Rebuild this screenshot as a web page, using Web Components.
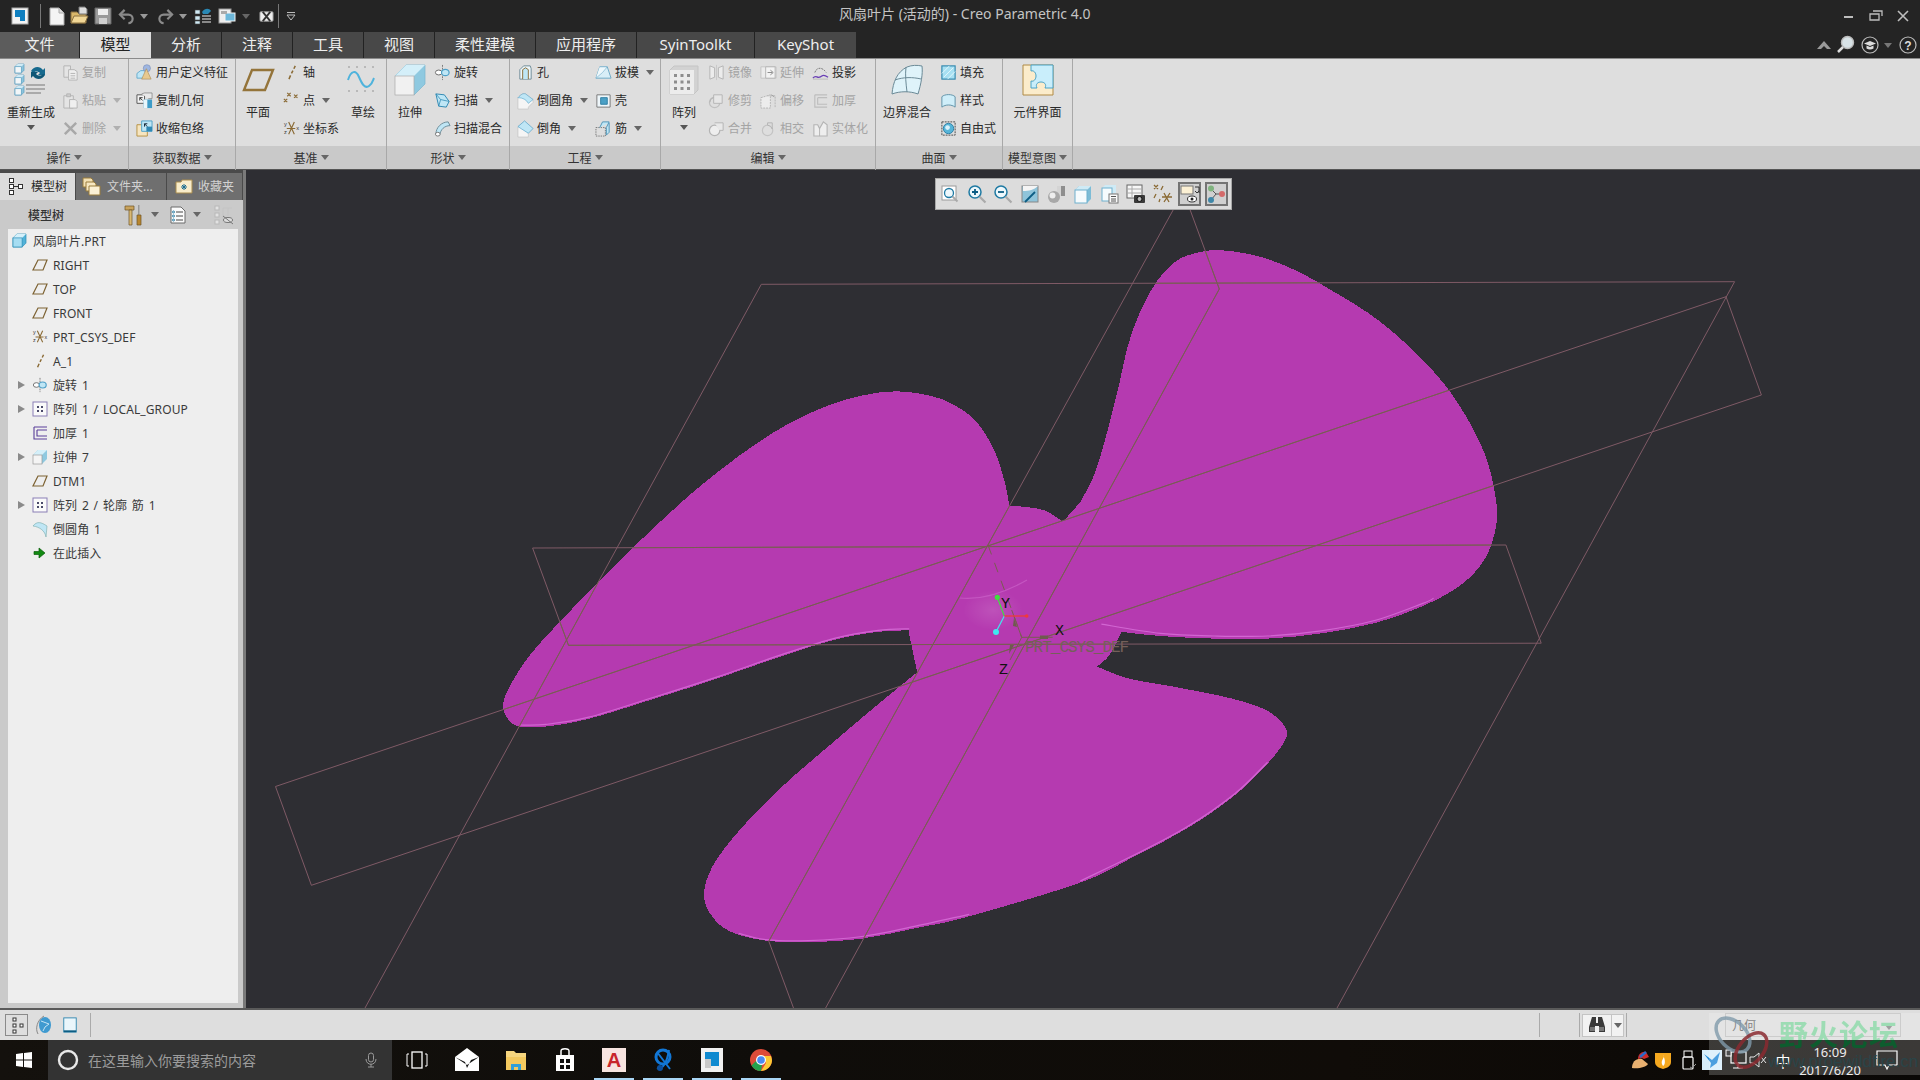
<!DOCTYPE html>
<html lang="zh"><head><meta charset="utf-8"><title>Creo Parametric</title>
<style>html,body{margin:0;padding:0;background:#222;overflow:hidden}</style></head>
<body><creo-app></creo-app>
<script>
const FONT='"Noto Sans","Noto Sans CJK SC",sans-serif';
const cube=(x,y,s,f='#f2f6f8',t='#cfeaf5',r='#8cc4dc',st='#5b9fc0')=>`<path d="M${x} ${y+s*.3}l${s*.3} -${s*.3}h${s*.7}v${s*.7}l-${s*.3} ${s*.3}h-${s*.7}z" fill="${r}" stroke="${st}" stroke-width=".7"/><path d="M${x} ${y+s*.3}l${s*.3} -${s*.3}h${s*.7}l-${s*.3} ${s*.3}z" fill="${t}"/><rect x="${x}" y="${y+s*.3}" width="${s*.7}" height="${s*.7}" fill="${f}" stroke="${st}" stroke-width=".7"/>`;
const G='#b4b4b4',GF='#e4e4e4',BR='#8a6a34',BL='#4fa0c8',LB='#bfe6f5';
const csysI=`<g font-family="Liberation Sans" font-size="6" fill="#333"><text x="1" y="6">y</text><text x="1" y="15">z</text><text x="14" y="11">x</text></g><path d="M6 2l6 13M12 2L6 15M4 9h9" stroke="${BR}" stroke-width="1.200" fill="none"/>`;
const ICONS={
 copy:[18,`<path d="M2 2h7v12H2z" fill="${GF}" stroke="${G}"/><path d="M7 6h6l3 2v9H7z" fill="#efefef" stroke="${G}"/><path d="M9 10h5M9 12.500h5M9 15h5" stroke="${G}"/>`],
 paste:[18,`<path d="M2 4h10v13H2z" fill="${GF}" stroke="${G}"/><path d="M5 2h4v3H5z" fill="#ccc" stroke="${G}"/><path d="M8 8h6l2 2v7H8z" fill="#efefef" stroke="${G}"/>`],
 del:[18,`<path d="M3 3l12 12M15 3L3 15" stroke="#a8a8a8" stroke-width="2.600"/>`],
 udf:[18,`<path d="M1 10l4-3h5v5l-3 3H1z" fill="${LB}" stroke="${BL}" stroke-width=".8"/><circle cx="11.500" cy="4.500" r="3.800" fill="#9fb6e0" stroke="#6f86b6" stroke-width=".6"/><path d="M11 5l5 11H6z" fill="#e7c98f" stroke="#a5854a" stroke-width=".6"/>`],
 cpgeo:[18,`<path d="M1 3h8v9H1z" fill="#f4f4f4" stroke="#555"/><path d="M4 6l3 3M4 9V6h3" stroke="#333" fill="none"/><path d="M8 8h9v9H8z" fill="#3d9cc8"/><path d="M8 8h4v9H8z" fill="#e8f6fb"/><path d="M6 2l3-1h8v6h-4" fill="#e8e8e8" stroke="#777" stroke-width=".7"/>`],
 shrink:[18,`<path d="M1 5h11v12H1z" fill="#f6e5c0" stroke="#b79243"/><path d="M6 1h11v11H6z" fill="${LB}" stroke="${BL}"/><path d="M9 4l3 3M9 7V4h3" stroke="#123" fill="none"/><path d="M11 7h6v5h-6z" fill="#2f88b4"/>`],
 axis:[18,`<path d="M13 2l-1.500 3M10.500 7l-1.500 3M8 12l-1.700 4" stroke="${BR}" stroke-width="1.600"/>`],
 point:[20,`<g stroke="${BR}" stroke-width="1.300"><path d="M5 1l4 4M9 1L5 5M13 3l4 4M17 3l-4 4M1 8l4 4M5 8l-4 4"/></g>`],
 csys:[18,csysI],
 rev:[18,`<path d="M9 1v16" stroke="#777" stroke-dasharray="2 1"/><ellipse cx="5" cy="9" rx="3.500" ry="2.600" fill="#fff" stroke="#666"/><ellipse cx="12" cy="9" rx="4" ry="3.400" fill="${LB}" stroke="${BL}" stroke-width="1.300"/>`],
 sweep:[18,`<path d="M2 2l9 1 5 7-3 6-8-1z" fill="${LB}" stroke="#2d87b1"/><path d="M2 2l5 6 9 2M7 8l-2 7" stroke="#2d87b1" fill="none" stroke-width=".8"/>`],
 swpb:[18,`<path d="M2 15C2 8 8 2 15 2l2 4C11 6 7 10 6 16z" fill="${LB}" stroke="#6a8b98"/><ellipse cx="4" cy="15" rx="2.500" ry="2" fill="#fff" stroke="#777"/>`],
 hole:[18,`<path d="M3 6l4-4h7l1 3v11H3z" fill="#eef7fb" stroke="#6d8a96"/><path d="M6 16V6l3-2 3 2v10" fill="${LB}" stroke="${BR}"/>`],
 round:[18,`<path d="M1 6C4 3 6 1 9 2l8 6v3l-5 5v2H1z" fill="#f5f5f5" stroke="#bbb" stroke-width=".6"/><path d="M1 6C4 3 6 1 9 2l8 6-5 4C10 8 6 6 1 6z" fill="${LB}" stroke="${BL}" stroke-width=".6"/>`],
 cham:[18,`<path d="M1 7l7-6 9 8-5 5v4H1z" fill="#f5f5f5" stroke="#bbb" stroke-width=".6"/><path d="M1 7l7-6 9 8-5 5z" fill="${LB}" stroke="${BL}" stroke-width=".7"/>`],
 draft:[18,`<path d="M1 15l4-12h8l4 12z" fill="#d8eef7" stroke="#6aa8c6"/><path d="M5 3l8 0-5 6-7 6" fill="#eef8fc" stroke="#6aa8c6" stroke-width=".6"/>`],
 shell:[18,`<path d="M2 3h14v13H2z" fill="#eef6fa" stroke="#777"/><path d="M6 6h7v7H6z" fill="#4aa0c6" stroke="#2f7ea4"/>`],
 rib:[18,`<path d="M1 8h10v9H1z" fill="none" stroke="#777" stroke-dasharray="1.500 1"/><path d="M5 8l3-6h7l-3 6v8l3-3V3" fill="${LB}" stroke="#4d94b8"/>`],
 mirror:[18,`<path d="M2 2l5 2v10l-5 2z" fill="#ececec" stroke="${G}"/><path d="M16 2l-5 2v10l5 2z" fill="#ececec" stroke="${G}"/><path d="M9 1v16" stroke="#c8c8c8"/>`],
 extend:[18,`<path d="M1 3h16v12H1z" fill="#ececec" stroke="#c4c4c4"/><path d="M6 3h10v12H6z" fill="#f3f3f3" stroke="${G}"/><path d="M8 9h5M11 6.500l3 2.500-3 2.500" stroke="#888" fill="none"/>`],
 project:[18,`<path d="M3 9c2-6 8-6 12 0" stroke="#777" fill="none" stroke-dasharray="2 1"/><path d="M1 15c3-4 4 0 7-1s3-4 9 0" stroke="#6a3fb5" stroke-width="1.400" fill="none"/><path d="M1 16h16" stroke="#bbb"/>`],
 trim:[18,`<circle cx="7" cy="11" r="5.500" fill="none" stroke="#c0c0c0" stroke-width="1.300"/><path d="M6 3h9v9H6z" fill="#e6e6e6" stroke="${G}"/><path d="M2 11a5 5 0 0 1 4-5" stroke="${G}" fill="none"/>`],
 offset:[18,`<path d="M1 6l10-3v14H1z" fill="#ececec" stroke="${G}" stroke-dasharray="2 1"/><path d="M8 4h8v13" fill="none" stroke="${G}" stroke-dasharray="2 1"/><path d="M12 3l3 2" stroke="#999"/>`],
 thick:[18,`<path d="M3 3h13M3 3v13h13M6 6h10M6 6v7h10" fill="none" stroke="#bdbdbd" stroke-width="1.200"/>`],
 merge:[18,`<circle cx="7" cy="11" r="5.500" fill="#eee" stroke="${G}" stroke-width="1.300"/><path d="M7 3h9v8H12" fill="#e8e8e8" stroke="${G}"/>`],
 inter:[18,`<circle cx="8" cy="11" r="5.500" fill="none" stroke="#c4c4c4" stroke-width="1.300"/><path d="M8 5.500a5.500 5.500 0 0 1 5 4V3H8z" fill="#ddd" stroke="${G}"/>`],
 solid:[18,`<path d="M2 5h4l2 4 4-7 4 3v12H2z" fill="#eee" stroke="${G}" stroke-width="1.200"/><path d="M8 9v8" stroke="${G}"/>`],
 fill:[18,`<rect x="2" y="2" width="14" height="14" fill="#a8e0f2" stroke="#2f86ad" stroke-width="1.200"/><path d="M2 10l8-8M4 14L14 4M8 16l8-8" stroke="#e3f6fc"/>`],
 style:[18,`<path d="M2 16V5c3-3 11-3 14 0v11c-4-3-10-3-14 0z" fill="#cfeef9" stroke="#5e8fa6"/>`],
 free:[18,`<rect x="2" y="2" width="14" height="14" fill="none" stroke="#444" stroke-dasharray="2 1"/><circle cx="9" cy="9" r="5.500" fill="#55b4d8" stroke="#2f7ea4"/><circle cx="8" cy="8" r="2.500" fill="#d8f1fa"/>`],
 regen:[32,`${cube(0,0,9)}${cube(0,11,9)}${cube(0,22,9)}<path d="M16 7c3-5 9-5 12-1l2-2v7h-7l2-2c-2-2-5-2-7 0z" fill="#176a8e"/><path d="M30 11c-3 5-9 5-12 1l-2 2V8h7l-2 2c2 2 5 2 7 0z" fill="#0f5776"/><path d="M11 21h19M11 25h19M11 29h15" stroke="#999" stroke-width="1.500"/>`],
 plane:[32,`<path d="M10 6h21L23 26H2z" fill="none" stroke="#94743a" stroke-width="2.400"/>`],
 sketch:[32,`<g fill="#777"><circle cx="2" cy="3" r=".7"/><circle cx="10" cy="3" r=".7"/><circle cx="18" cy="3" r=".7"/><circle cx="26" cy="3" r=".7"/><circle cx="2" cy="27" r=".7"/><circle cx="10" cy="27" r=".7"/><circle cx="18" cy="27" r=".7"/><circle cx="26" cy="27" r=".7"/></g><path d="M1 16c3-10 8-10 11-3s6 12 10 9 4-6 5-8" fill="none" stroke="#4fb3dc" stroke-width="2"/>`],
 extrude:[32,`<path d="M1 12L12 1h19v19L20 31z" fill="#8fc9e0" stroke="#7ab4ce" stroke-width=".7"/><path d="M1 12L12 1h19L20 12z" fill="#d4eff9"/><rect x="1" y="12" width="19" height="19" fill="#f1f1f1" stroke="#aaa" stroke-width=".7"/>`],
 pattern:[32,`<path d="M2 6l4-4h24v24l-4 4H2z" fill="#d2d2d2" stroke="#c4c4c4"/><rect x="2" y="6" width="24" height="24" fill="#ececec"/><g fill="#8e8e8e"><path d="M6 10h3v3H6zM12.500 10h3v3h-3zM19 10h3v3h-3zM6 16.500h3v3H6zM12.500 16.500h3v3h-3zM19 16.500h3v3h-3zM6 23h3v3H6zM12.500 23h3v3h-3zM19 23h3v3h-3z"/></g>`],
 bound:[32,`<path d="M1 30C2 18 6 8 16 3c5-2 10-2 15-1 1 8-1 18-4 28-8-3-18-3-26 0z" fill="#dff3fa" stroke="#6b8a97"/><path d="M15 3c-1 8 0 17 1 25M4 16c8-3 18-3 26-1" stroke="#6b8a97" fill="none"/>`],
 comp:[32,`<path d="M1 1h30v30H1z" fill="#fbeccb" stroke="#b08a45"/><path d="M9 1h22v23h-8c2-4-1-6-4-6s-6 2-4 6h-6v-7c3 1 5-2 5-5s-2-6-5-5z" fill="#c9eefb" stroke="#4aa3c8"/>`],
 treeI:[18,`<g fill="#fff" stroke="#333"><rect x="1.500" y="1.500" width="4" height="4"/><rect x="1.500" y="7.500" width="4" height="4"/><rect x="1.500" y="13.500" width="4" height="4"/><rect x="10.500" y="7.500" width="4" height="4"/></g><path d="M5.500 9.500h5" stroke="#333"/>`],
 folders:[20,`<path d="M1 2h8l2 2v7H1z" fill="#f2e0b4" stroke="#9a7c3c"/><path d="M4 6h8l2 2v7H4z" fill="#f6e7c2" stroke="#9a7c3c"/><path d="M7 10h11v9H7z" fill="#fbf0d4" stroke="#9a7c3c"/>`],
 fav:[18,`<path d="M1 5h5l1-2h10v13H1z" fill="#f8ecca" stroke="#a98c4e"/><path d="M9 7v6M6 10h6M7 8l4 4M11 8l-4 4" stroke="#1b6c90"/>`],
 part:[14,cube(0,0,13,'#a6ddf2','#d5f0fa','#52b2d8','#2a8cb6')],
 pl:[16,`<path d="M6 3h9l-4 10H1z" fill="none" stroke="#7d6232" stroke-width="1.200"/>`],
 patt:[16,`<rect x="1" y="1" width="14" height="14" fill="#fafafa" stroke="#8a7fb5"/><path d="M5 5h2v2H5zM9 5h2v2H9zM5 9h2v2H5zM9 9h2v2H9z" fill="#4a4a6a"/>`],
 thk:[16,`<path d="M2 2h13M2 2v12h13M5 5h10M5 5v6h10" fill="none" stroke="#5a3e9a" stroke-width="1.100"/>`],
 ext:[16,`<path d="M1 6l5-5h9v9l-5 5z" fill="#8fc9e0"/><path d="M1 6l5-5h9l-5 5z" fill="#d4eff9"/><rect x="1" y="6" width="9" height="9" fill="#f4f4f4" stroke="#999" stroke-width=".7"/>`],
 rnd:[16,`<path d="M1 5C5 0 9 1 15 5l-1 11c-1-6-6-10-13-11z" fill="#bfe6f5" stroke="#7aa" stroke-width=".6"/>`],
 ins:[16,`<path d="M2 6.500h5V3l6 5-6 5V9.500H2z" fill="#128a12" stroke="#0b5c0b" stroke-width=".7"/>`],
 hammer:[22,`<path d="M1 2h9v4H1z" fill="#c9a35c" stroke="#6d5426" stroke-width=".7"/><path d="M5 6h3v15H5z" fill="#d9b873" stroke="#6d5426" stroke-width=".7"/><path d="M14 1h1.500v10H14z" fill="#999"/><path d="M13 11h4v10h-4z" fill="#b8862e" stroke="#6d5426" stroke-width=".7"/>`],
 list:[18,`<path d="M2 1h10l4 4v12H2z" fill="#fbfbfb" stroke="#6b6b6b"/><path d="M7 6h7M7 10h7M7 14h7" stroke="#444"/><g fill="none" stroke="#2a7ea5"><circle cx="4.500" cy="6" r="1"/><circle cx="4.500" cy="10" r="1"/><circle cx="4.500" cy="14" r="1"/></g>`],
 hide:[20,`<g fill="#e2e2e2" stroke="#b8b8b8"><rect x="1" y="1" width="4" height="4"/><rect x="1" y="8" width="4" height="4"/><rect x="1" y="15" width="4" height="4"/></g><path d="M9 3h9M9 3v14M14 3v8" stroke="#c4c4c4" fill="none"/><ellipse cx="14" cy="15" rx="4.500" ry="2.500" fill="#ddd" stroke="#777"/><path d="M9 11l10 8" stroke="#777"/>`],
 logo:[18,`<rect x="1" y="1" width="16" height="16" fill="#f3f3f3" stroke="#aaa"/><rect x="4" y="3" width="10" height="11" fill="#0f7fc0"/><rect x="4" y="10" width="5" height="5" fill="#f3f3f3"/>`],
 new:[18,`<path d="M2 1h9l5 5v12H2z" fill="#f4f4f4" stroke="#aaa"/><path d="M11 1v5h5" fill="#ddd" stroke="#aaa"/>`],
 open:[20,`<path d="M2 6h6l2 2h7v9H2z" fill="#d9b76a" stroke="#8a7040"/><path d="M2 17l3-7h14l-3 7z" fill="#f1d796" stroke="#8a7040"/><path d="M10 1h6l2 2v5h-8z" fill="#ddd" stroke="#777"/>`],
 save:[18,`<path d="M1 1h16v16H1z" fill="#9a9a9a" stroke="#666"/><rect x="4" y="2" width="10" height="6" fill="#eee"/><rect x="5" y="11" width="8" height="6" fill="#d0d0d0"/>`],
 undo:[18,`<path d="M2 7h9a4.500 4.500 0 0 1 0 9" fill="none" stroke="#8a8a8a" stroke-width="2.300"/><path d="M7 2L2 7l5 5" fill="none" stroke="#8a8a8a" stroke-width="2.300"/>`],
 redo:[18,`<path d="M16 7H7a4.500 4.500 0 0 0 0 9" fill="none" stroke="#8a8a8a" stroke-width="2.300"/><path d="M11 2l5 5-5 5" fill="none" stroke="#8a8a8a" stroke-width="2.300"/>`],
 qregen:[18,`<g fill="#cfeaf5" stroke="#444" stroke-width=".6"><rect x="1" y="3" width="5" height="4"/><rect x="1" y="9" width="5" height="4"/><rect x="1" y="14" width="5" height="3"/></g><path d="M8 9h9M8 12h9M8 15h9" stroke="#aaa" stroke-width="1.400"/><path d="M8 5c3-4 7-4 9-1l-3 3h-5z" fill="#2a88b4"/>`],
 win:[18,`<rect x="1" y="2" width="12" height="14" fill="#eee" stroke="#999"/><rect x="7" y="6" width="10" height="8" fill="#6db7d9" stroke="#f4f4f4"/><rect x="3" y="4" width="6" height="3" fill="#aaa"/>`],
 closeq:[16,`<rect x="1" y="3" width="14" height="10" rx="1" fill="#eee" stroke="#999"/><path d="M4 3l8 10M12 3L4 13" stroke="#333" stroke-width="2"/>`],
 qarrow:[12,`<path d="M2 2.500h8" stroke="#bbb"/><path d="M2 5l4 5 4-5z" fill="none" stroke="#bbb"/>`],
 min:[14,`<path d="M2 8h9" stroke="#bdbdbd" stroke-width="2"/>`],
 rest:[14,`<path d="M4 2h9v5M1 5h9v6H1z" fill="none" stroke="#bdbdbd" stroke-width="1.300"/>`],
 cls:[14,`<path d="M2 2l10 10M12 2L2 12" stroke="#bdbdbd" stroke-width="1.600"/>`],
 up:[16,`<path d="M1 12L8 4l7 8z" fill="#9a9a9a"/><path d="M5 12l3-3 3 3z" fill="#242424"/>`],
 srch:[20,`<circle cx="11.500" cy="7.500" r="6" fill="#d8e2e6" stroke="#bbb" stroke-width="1.400"/><path d="M7 12l-5 5" stroke="#ddd" stroke-width="2.500"/>`],
 cap:[18,`<circle cx="9" cy="9" r="8" fill="none" stroke="#bbb" stroke-width="1.200"/><path d="M3 7.500L9 5l6 2.500L9 10z" fill="#ddd"/><path d="M5.500 9.500v3c2 1.300 5 1.300 7 0v-3L9 11z" fill="#ddd"/>`],
 help:[18,`<circle cx="9" cy="9" r="8" fill="none" stroke="#bbb" stroke-width="1.200"/><text x="9" y="13.500" text-anchor="middle" font-family="Liberation Sans" font-weight="700" font-size="12" fill="#ddd">?</text>`],
 t1:[20,`<rect x="2" y="2" width="14" height="14" fill="#fff" stroke="#9a9a9a"/><circle cx="9" cy="9" r="4.500" fill="#eef8fc" stroke="#1f7aa3" stroke-width="1.300"/><path d="M12.500 12.500l5 5" stroke="#aaa" stroke-width="2"/>`],
 t2:[20,`<circle cx="8" cy="8" r="6" fill="#eef8fc" stroke="#1f7aa3" stroke-width="1.500"/><path d="M5 8h6M8 5v6" stroke="#0c5d84" stroke-width="1.800"/><path d="M12.500 12.500l6 6" stroke="#aaa" stroke-width="2.200"/>`],
 t3:[20,`<circle cx="8" cy="8" r="6" fill="#eef8fc" stroke="#1f7aa3" stroke-width="1.500"/><path d="M5 8h6" stroke="#0c5d84" stroke-width="1.800"/><path d="M12.500 12.500l6 6" stroke="#aaa" stroke-width="2.200"/>`],
 t4:[20,`<rect x="2" y="2" width="16" height="16" fill="#8fc4da" stroke="#888"/><path d="M3 18V7c6 0 11-1 15-5H3z" fill="#f4f4f4"/><path d="M5 18L15 8" stroke="#0c5d84" stroke-width="1.800"/>`],
 t5:[20,`<rect x="10" y="2" width="8" height="10" fill="#8e8e8e"/><rect x="10" y="2" width="4" height="10" fill="#d4d4d4"/><circle cx="7" cy="13" r="6" fill="#a8a8a8"/><circle cx="5.500" cy="11.500" r="3" fill="#eee"/>`],
 t6:[20,`<path d="M2 6l4-4h12v13l-4 4H2z" fill="#7dbcd6"/><path d="M2 6l4-4h12l-4 4z" fill="#cfeaf5"/><rect x="2" y="6" width="12" height="13" fill="#f6fbfd" stroke="#6fb0cd"/>`],
 t7:[20,`<path d="M2 4l3-3h11v8H12v3H2z" fill="#cfeaf5"/><rect x="2" y="4" width="10" height="13" fill="#f6fbfd" stroke="#6fb0cd"/><rect x="9" y="10" width="9" height="9" fill="#fbfbfb" stroke="#777"/><path d="M11 12.500h5M11 15h5M11 17h5" stroke="#555"/>`],
 t8:[20,`<rect x="1" y="1" width="15" height="13" fill="#f7f7f7" stroke="#666"/><path d="M1 5h15M1 9h15M6 1v13" stroke="#aaa"/><rect x="8" y="11" width="11" height="8" rx="1" fill="#3a3a3a"/><circle cx="13.500" cy="15" r="2.500" fill="#bbb" stroke="#111"/>`],
 t9:[20,`<g stroke="${BR}" stroke-width="1.300" fill="none"><path d="M1 1l4 4M5 1L1 5M1 14l2-4M10 2L8 6M6 18l1-3M11 9l5 9M17 9l-6 9M9 13h10"/></g>`],
 t10:[20,`<rect x="1" y="2" width="12" height="8" fill="#fbf0d4" stroke="#777"/><path d="M15 3h4v6M17 9l-2-2M17 9l2-2" stroke="#333" fill="none"/><ellipse cx="12" cy="15" rx="4.500" ry="3" fill="#fff" stroke="#333"/><circle cx="12" cy="15" r="1.500" fill="#222"/>`],
 t11:[20,`<path d="M5 5l5 5-5 6M10 10h7" stroke="#555" fill="none"/><circle cx="5" cy="4.500" r="3" fill="#7fb37e"/><circle cx="16" cy="10" r="3" fill="#d46a6a"/><circle cx="5" cy="16" r="3" fill="#3f87a8"/>`],
 s1:[16,`<g fill="#fff" stroke="#333"><rect x="4" y="1" width="3" height="3"/><rect x="4" y="7" width="3" height="3"/><rect x="4" y="13" width="3" height="3"/><rect x="11" y="7" width="3" height="3"/></g>`],
 s2:[20,`<ellipse cx="11" cy="10" rx="6" ry="8" fill="#3f9ad0"/><path d="M7 6l8 3-4 3-2 4" stroke="#c4e4f4" fill="none"/><path d="M10 1C3 5 1 14 4 19" stroke="#888" fill="none"/>`],
 s3:[18,`<rect x="2" y="1" width="14" height="16" fill="#eaf6fb" stroke="#2a83ad"/><path d="M2 16h14" stroke="#0c5d84" stroke-width="2"/>`],
 binoc:[20,`<path d="M5 2h4v6h2V2h4l3 10v5h-6v-6H8v6H2v-5z" fill="#3a3a3a"/><path d="M3 12h5v4H3zM12 12h5v4h-5z" fill="#777"/>`],
 wlogo:[18,`<path d="M1 3l7-1v6.500H1zM9 2l8-1v7.500H9zM1 9.500h7V16l-7-1zM9 9.500h8V17l-8-1z" fill="#fff"/>`],
 ring:[22,`<circle cx="11" cy="11" r="9" fill="none" stroke="#e8e8e8" stroke-width="2.400"/>`],
 mic:[16,`<rect x="5.500" y="1" width="5" height="9" rx="2.500" fill="none" stroke="#9a9a9a"/><path d="M3 7c0 7 10 7 10 0M8 12v3M5 15h6" fill="none" stroke="#9a9a9a"/>`],
 tview:[22,`<rect x="6" y="3" width="10" height="16" fill="none" stroke="#fff" stroke-width="1.300"/><path d="M3 5H1v12h2M19 5h2v12h-2" fill="none" stroke="#fff"/>`],
 mail:[26,`<path d="M1 10L13 1l12 9v14H1z" fill="#fff"/><path d="M1 10l12 8 12-8-8 3-4 8-2-6z" fill="#111"/>`],
 folder:[24,`<path d="M2 3h8l2 2h10v17H2z" fill="#f6d67f"/><path d="M2 9h20v13H2z" fill="#f3c95f"/><path d="M7 22v-6h10v6z" fill="#2f9fd8"/><path d="M10 22v-3h4v3z" fill="#f3c95f"/>`],
 store:[24,`<path d="M3 7h18v16H3z" fill="#fff"/><path d="M8 7V3c0-3 8-3 8 0v4" fill="none" stroke="#fff" stroke-width="1.500"/><path d="M7 11h4v4H7zM13 11h4v4h-4zM7 17h4v4H7zM13 17h4v4h-4z" fill="#111"/>`],
 acad:[24,`<rect width="24" height="24" fill="#f7e4e0"/><text x="12" y="19" text-anchor="middle" font-family="Liberation Sans" font-weight="700" font-size="20" fill="#c8252b">A</text>`],
 blue:[24,`<circle cx="12" cy="9" r="7" fill="none" stroke="#1277d6" stroke-width="3"/><path d="M6 20c6 2 10-6 12-18M6 4l13 17" stroke="#1277d6" stroke-width="2" fill="none"/><circle cx="9" cy="20" r="3" fill="#0a4f9e"/>`],
 creoB:[24,`<rect x="1" width="22" height="24" fill="#f1f1f1"/><rect x="5" y="4" width="14" height="14" fill="#108ad0"/><rect x="5" y="11" width="6" height="9" fill="#c8c8c8"/>`],
 chrome:[24,`<circle cx="12" cy="12" r="11" fill="#dd4b39"/><path d="M12 23A11 11 0 0 1 2.500 17.500L8 12l5 5z" fill="#23a24d"/><path d="M23 12a11 11 0 0 1-11 11l5-8-2-7h7z" fill="#fcc934"/><circle cx="12" cy="12" r="5" fill="#fff"/><circle cx="12" cy="12" r="3.800" fill="#4a8af4"/>`],
 cc:[20,`<path d="M2 18c0-6 4-10 10-9l6 5c-2 3-9 5-16 4z" fill="#e8b070"/><path d="M8 9c0-5 4-8 8-7l3 5-5 2-2-1z" fill="#cc2a2a"/><path d="M10 7l6-5" stroke="#2a6ac8" stroke-width="2.500"/>`],
 shield:[20,`<path d="M2 3h16v9c0 4-4 6-8 7-4-1-8-3-8-7z" fill="#f5a81f"/><path d="M10 5c3 3-4 5 0 11 2-1 3-5 0-11z" fill="#fff"/>`],
 usb:[20,`<rect x="6" y="1" width="8" height="6" fill="none" stroke="#fff"/><rect x="5" y="7" width="10" height="12" rx="1" fill="none" stroke="#fff" stroke-width="1.200"/><path d="M12 17l2 1 4-4" stroke="#999" fill="none"/>`],
 bird:[22,`<rect x="1" y="1" width="20" height="20" fill="#d8eefa"/><path d="M3 5l8 6 8-8-3 11-7 5 1-5z" fill="#1e88d8"/>`],
 net:[22,`<rect x="6" y="3" width="15" height="11" fill="none" stroke="#fff" stroke-width="1.200"/><rect x="1" y="1" width="5" height="6" fill="#222" stroke="#fff"/><path d="M13 14v5M8 19h10" stroke="#fff" stroke-width="1.200"/>`],
 vol:[20,`<path d="M2 7h4l5-4v14l-5-4H2z" fill="none" stroke="#ddd"/><path d="M13 7l5 6M18 7l-5 6" stroke="#ddd"/>`],
 note:[22,`<path d="M1 2h20v14h-8l-2 4-2-4H1z" fill="none" stroke="#fff" stroke-width="1.200"/>`]
};
function def(name,css,html,setup){
  customElements.define(name,class extends HTMLElement{
    connectedCallback(){
      if(this.shadowRoot)return;
      const r=this.attachShadow({mode:'open'});
      const h=typeof html==='function'?html(this):html;
      r.innerHTML=`<style>${css}</style>${h}`;
      setup&&setup(r,this);
    }
  });
}
def('c-ico',':host{display:inline-flex;flex:none;align-items:center;justify-content:center}svg{display:block;overflow:visible}','',(r,h)=>{
  const [s,inner]=ICONS[h.getAttribute('name')]||[16,''];
  const w=h.getAttribute('size')||s;
  r.innerHTML+=`<svg viewBox="0 0 ${s} ${s}" width="${w}" height="${w}">${inner}</svg>`;
});
const tri=(c='#666')=>`<span style="display:inline-block;width:0;height:0;border:4px solid transparent;border-top:5px solid ${c};border-bottom:0"></span>`;
const sp=w=>`<span style="width:${w}px;flex:none"></span>`;

def('creo-titlebar',`:host{display:flex;align-items:center;height:32px;background:#242424;color:#c4c4c4;font:14px ${FONT};position:relative;flex:none}
 .sep{width:1px;height:24px;background:#777;flex:none}
 .q{display:flex;align-items:center}
 .title{position:absolute;left:839px;top:4px;line-height:20px;white-space:nowrap}
 .ctl{margin-left:auto;display:flex;gap:13px;padding-right:10px;align-items:center}`,
 ()=>`<div class="q" style="padding-left:11px"><c-ico name="logo"></c-ico><span class="sep" style="margin:0 7px 0 11px"></span>
 <c-ico name="new"></c-ico>${sp(3)}<c-ico name="open" size="20"></c-ico>${sp(5)}<c-ico name="save"></c-ico>
 ${sp(6)}<c-ico name="undo" size="17"></c-ico>${sp(5)}${tri('#999')}${sp(9)}<c-ico name="redo" size="17"></c-ico>${sp(5)}${tri('#999')}${sp(7)}
 <c-ico name="qregen"></c-ico>${sp(6)}<c-ico name="win"></c-ico>${sp(6)}${tri('#666')}${sp(9)}<c-ico name="closeq" size="15"></c-ico>${sp(4)}<span class="sep"></span>${sp(6)}<c-ico name="qarrow"></c-ico></div>
 <div class="title">风扇叶片 (活动的) - Creo Parametric 4.0</div>
 <div class="ctl"><c-ico name="min"></c-ico><c-ico name="rest"></c-ico><c-ico name="cls"></c-ico></div>`);

def('creo-tab',`:host{display:flex;align-items:center;justify-content:center;height:26px;padding-bottom:2px;background:#484848;color:#eee;font:15px/24px ${FONT};border-right:1px solid #222;box-sizing:border-box;flex:none}
 :host([first]){background:#5c5c5c}:host([active]){background:#dedede;color:#222;border-right:0}`,'<slot></slot>');
def('creo-tabs',`:host{display:flex;height:26px;background:#242424;flex:none;align-items:center}
 .r{margin-left:auto;display:flex;align-items:center;padding-right:3px}`,
 `<slot></slot><div class="r"><c-ico name="up"></c-ico>${sp(4)}<c-ico name="srch"></c-ico>${sp(5)}<c-ico name="cap"></c-ico>${sp(5)}${tri('#777')}${sp(7)}<c-ico name="help"></c-ico></div>`);

def('creo-ribbon',`:host{display:flex;height:112px;background:#dedede;flex:none;font:12px ${FONT};color:#2a2a2a;border-top:1px solid #8a8a8a;box-sizing:border-box}
 .fill{flex:1;display:flex;flex-direction:column}.fill i{flex:1}.fill b{height:24px;background:#c9c9c9;border-bottom:1px solid #555;box-sizing:border-box}`,
 `<slot></slot><div class="fill"><i></i><b></b></div>`);
def('rb-group',`:host{display:flex;flex-direction:column;flex:none;box-sizing:border-box;border-right:1px solid #a8a8a8}
 .body{flex:1;display:flex;min-height:0}
 .lab{height:24px;background:#c9c9c9;border-bottom:1px solid #555;display:flex;align-items:center;justify-content:center;gap:3px;color:#333;box-sizing:border-box;white-space:nowrap}`,
 h=>`<div class="body"><slot></slot></div><div class="lab">${h.getAttribute('label')}${tri('#666')}</div>`);
def('rb-big',`:host{display:flex;flex-direction:column;align-items:center;flex:none;padding-top:5px;box-sizing:border-box;white-space:nowrap}
 .l{margin-top:8px;line-height:18px}.a{margin-top:3px;height:6px;line-height:0}`,
 h=>`<c-ico name="${h.getAttribute('icon')}"></c-ico><div class="l"><slot></slot></div>${h.hasAttribute('arrow')?`<div class="a">${tri('#555')}</div>`:''}`);
def('rb-col',`:host{display:flex;flex-direction:column;flex:none}`,'<slot></slot>');
def('rb-small',`:host{display:flex;align-items:center;height:28px;padding-bottom:2px;box-sizing:border-box;gap:3px;white-space:nowrap}
 :host([off]){color:#a4a4a4}c-ico{width:17px}.a{margin-left:4px;line-height:0}`,
 h=>`<c-ico name="${h.getAttribute('icon')}" size="17"></c-ico><slot></slot>${h.hasAttribute('arrow')?`<span class="a">${tri(h.hasAttribute('off')?'#b0b0b0':'#666')}</span>`:''}`);

def('side-tab',`:host{display:flex;align-items:center;height:27px;padding-bottom:2px;box-sizing:border-box;font:12px ${FONT};background:#6f6f6f;color:#d2d2d2;gap:5px;flex:none;white-space:nowrap}
 :host([active]){background:#dcdcdc;color:#2a2a2a}`,
 h=>`<c-ico name="${h.getAttribute('icon')}"></c-ico><slot></slot>`);
def('tree-row',`:host{display:flex;align-items:center;height:24px;font:12px ${FONT};color:#3a3a3a;white-space:nowrap;word-spacing:1.500px;letter-spacing:.1px}
 .x{width:24px;flex:none;padding-left:10px;box-sizing:border-box;line-height:0}
 .x span{display:inline-block;width:0;height:0;border:4px solid transparent;border-left:7px solid #8a8a8a;border-right:0}
 c-ico{width:16px;margin-right:5px}`,
 h=>`<div class="x">${h.hasAttribute('exp')?'<span></span>':''}</div><c-ico name="${h.getAttribute('icon')}" size="16"></c-ico><slot></slot>`);
def('creo-sidebar',`:host{display:flex;flex-direction:column;width:246px;flex:none;background:#cacaca;box-sizing:border-box;border-right:3px solid #7a7a7a;font:12px ${FONT}}
 .tabs{display:flex;background:#4a4a4a;padding-top:3px;gap:1px;flex:none}
 .hd{display:flex;align-items:center;height:29px;flex:none;box-sizing:border-box;padding-left:28px;color:#333;font-weight:500}
 .tree{flex:1;margin:0 5px 5px 8px;background:#eeeeee;min-height:0}
 .root{display:flex;align-items:center;height:24px;color:#3a3a3a;padding-left:5px;gap:6px}`,
 `<div class="tabs"><side-tab active icon="treeI" style="width:75px;padding-left:8px">模型树</side-tab><side-tab icon="folders" style="width:90px;padding-left:6px">文件夹...</side-tab><side-tab icon="fav" style="width:75px;padding-left:8px">收藏夹</side-tab></div>
 <div class="hd">模型树${sp(60)}<c-ico name="hammer"></c-ico>${sp(5)}${tri('#666')}${sp(10)}<c-ico name="list"></c-ico>${sp(6)}${tri('#666')}${sp(13)}<c-ico name="hide"></c-ico></div>
 <div class="tree"><div class="root"><c-ico name="part"></c-ico>风扇叶片.PRT</div><slot></slot></div>`);

const YF=.5172;
const a=(x,y)=>[246+x*.5357,200+y*YF],b=(x,y)=>[1080+x*.5357,200+y*YF];
const seg=p=>{let d='';for(let i=0;i<p.length-1;i++){const p0=p[i-1]||p[i],p1=p[i],p2=p[i+1],p3=p[i+2]||p2;
 d+=`C${(p1[0]+(p2[0]-p0[0])/6).toFixed(1)} ${(p1[1]+(p2[1]-p0[1])/6).toFixed(1)} ${(p2[0]-(p3[0]-p1[0])/6).toFixed(1)} ${(p2[1]-(p3[1]-p1[1])/6).toFixed(1)} ${p2[0].toFixed(1)} ${p2[1].toFixed(1)}`;}return d;};
const s1=[[1425,592],[1415,540],[1395,480],[1360,425],[1310,390],[1260,375],[1210,370],[1150,378],[1080,400],[1000,440],[920,495],[840,560],[760,635],[680,715],[600,800],[530,880],[490,945],[480,980],[490,1005],[510,1018],[560,1018],[640,1003],[760,965],[880,925],[1000,882],[1100,850],[1180,835],[1238,832]].map(p=>a(...p));
const s2=[[1253,913],[1180,975],[1100,1045],[1000,1135],[920,1220],[870,1290],[855,1345],[870,1385],[905,1415],[970,1432],[1050,1435],[1150,1428],[1250,1408],[1350,1385]].map(p=>a(...p)).concat([[0,1320],[100,1270],[200,1215],[290,1150],[350,1090],[385,1040],[378,1012],[345,985],[280,963],[180,942],[90,925],[32,902]].map(p=>b(...p)));
const s3=[[32,902],[55,880],[78,835]].map(p=>b(...p));
const s4=[[78,835],[150,843],[250,848],[350,848],[450,838],[550,818],[640,785],[710,745],[755,695],[777,630],[775,570],[755,490],[710,400],[650,320],[560,235],[470,175],[400,135],[330,108],[260,97],[215,103],[180,118],[145,155],[115,210],[90,280],[70,370],[45,470],[25,535],[0,585]].map(p=>b(...p));
const s5=[[1525,622]].map(p=>a(...p));
const s6=[[1525,622],[1490,600],[1450,593],[1425,592]].map(p=>a(...p));
const M=p=>`M${p[0][0].toFixed(1)} ${p[0][1].toFixed(1)}`;
const L=p=>`L${p[0].toFixed(1)} ${p[1].toFixed(1)}`;
const blade=M(s1)+seg(s1)+L(a(1238,840))+L(s2[0])+seg(s2)+seg(s3)+seg(s4)+L(s5[0])+seg(s6)+'Z';
const edge=(arr,f)=>{const p=arr.map(q=>f(...q));return M(p)+seg(p)};
const hl=edge([[510,1015],[560,1014],[640,1000],[760,962],[880,922],[1000,879],[1100,847],[1180,832],[1238,829]],a)
 +edge([[920,1418],[970,1430],[1050,1432],[1150,1424],[1250,1404],[1350,1381]],a)
 +edge([[0,1317],[100,1267],[200,1212],[290,1147],[350,1087]],b)
 +edge([[40,820],[150,838],[250,843],[350,843],[450,833],[550,813],[640,780],[660,770]],b);
const wires=`M761.3 284.3L1734.6 281.7L1337 1008M761.3 284.3L365 1008
 M532.6 548L1505.9 545L1541.2 643.2L568.5 645.3Z
 M275.500 786.500L1726 296.700L1761.4 395L311.4 885.3Z
 M1173.700 209L768.8 941.200L793.5 1008M1189.800 209L1219.3 289L825.600 1008`;
const axes=`M1021.7 637.3H1052.7M1021.7 637.3L1011.7 610M1021.7 637.3L1010 660`;
def('creo-viewport',`:host{display:block;position:relative;flex:1;min-width:0;background:#2e2e33;overflow:hidden}
 svg.v{display:block;width:100%;height:100%}
 .tb{position:absolute;left:689px;top:8px;width:297px;height:32px;box-sizing:border-box;background:#dcdcdc;border:1px solid #a8a8a8;display:flex;align-items:center;padding-left:1px}
 .b{width:26.600px;height:24px;flex:none;display:flex;align-items:center;justify-content:center;box-sizing:border-box}
 .on{border:2px solid #747474;background:#d0d0d0;width:23px;margin:0 1.800px}`,
 `<svg class="v" viewBox="246 170 1674 838" aria-label="风扇叶片">
 <defs><clipPath id="cb"><path d="${blade}"/></clipPath>
 <radialGradient id="hg"><stop offset="0" stop-color="#fff" stop-opacity=".12"/><stop offset="1" stop-color="#fff" stop-opacity="0"/></radialGradient></defs>
 <path d="${blade}" fill="#b53ab0" shape-rendering="crispEdges"/>
 <path d="${hl}" fill="none" stroke="#d266d2" stroke-width="1.200"/>
 <ellipse cx="993" cy="610" rx="30" ry="20" fill="url(#hg)"/>
 <path d="M960 598q30 3 67-18" fill="none" stroke="#c85cc6" stroke-width="1.200" opacity=".8"/>
 <path d="${wires}" fill="none" stroke="#7f5a66" stroke-width="1"/>
 <g clip-path="url(#cb)"><path d="${wires}" fill="none" stroke="#7a5c52" stroke-width="1"/></g>
 <path d="${axes}" fill="none" stroke="#7a5c52" stroke-width="1"/>
 <path d="M988 545L1021.700 637.300" fill="none" stroke="#7a5c52" stroke-width="1" stroke-dasharray="10 9"/>
 <path d="M1040 635.500h8v3.500h-8zM1014 618l3 9-4-1zM1014 645l-5 9 1-9z" fill="#6e5b4e"/>
 <text x="1025" y="651.500" font-family="Liberation Mono" font-size="16" letter-spacing="-1" fill="#75605a">PRT_CSYS_DEF</text>
 <g font-family="Liberation Mono" font-size="15" fill="#111"><text x="1001" y="608">Y</text><text x="1055" y="635">X</text><text x="999" y="674">Z</text></g>
 <path d="M1004.3 616L997.3 597.3" stroke="#3fe03f" stroke-width="1.200"/><path d="M1004.3 616L996 632" stroke="#3fe8f0" stroke-width="1.200"/><path d="M1004.3 616H1026.7" stroke="#f03a3a" stroke-width="1.300"/>
 <circle cx="997.3" cy="597.3" r="2.600" fill="#3fe03f"/><circle cx="996" cy="632" r="3" fill="#3fe8f0"/><circle cx="1026.700" cy="616" r="1.800" fill="#f03a3a"/>
 </svg>
 <div class="tb"><div class="b"><c-ico name="t1"></c-ico></div><div class="b"><c-ico name="t2"></c-ico></div><div class="b"><c-ico name="t3"></c-ico></div><div class="b"><c-ico name="t4"></c-ico></div><div class="b"><c-ico name="t5"></c-ico></div><div class="b"><c-ico name="t6"></c-ico></div><div class="b"><c-ico name="t7"></c-ico></div><div class="b"><c-ico name="t8"></c-ico></div><div class="b"><c-ico name="t9"></c-ico></div><div class="b on"><c-ico name="t10"></c-ico></div><div class="b on"><c-ico name="t11"></c-ico></div></div>`);

def('creo-status',`:host{display:flex;align-items:center;height:32px;background:#dedede;border-top:2px solid #5a5a5a;box-sizing:border-box;flex:none;font:12px ${FONT};color:#555}
 .box{border:1px solid #8a8a8a;width:23px;height:22px;display:flex;align-items:center;justify-content:center;box-sizing:border-box;margin-left:5px}
 .d{width:1px;height:24px;background:#aaa;flex:none}
 .find{display:flex;width:42px;height:23px;margin-left:2px;box-sizing:border-box;border:1px solid #c4c4c4;background:#f2f2f2;align-items:center}
 .find div{display:flex;align-items:center;justify-content:center;height:100%}
 .geo{width:176px;height:24px;margin-left:98px;box-sizing:border-box;border:1px solid #c0c0c0;display:flex;align-items:center;padding-left:6px;color:#666}`,
 `<div class="box"><c-ico name="s1"></c-ico></div>${sp(6)}<c-ico name="s2"></c-ico>${sp(8)}<c-ico name="s3" size="16"></c-ico>${sp(12)}<span class="d"></span>
 ${sp(1448)}<span class="d"></span>${sp(39)}<span class="d"></span>
 <div class="find"><div style="width:28px;border-right:1px solid #c4c4c4"><c-ico name="binoc"></c-ico></div><div style="flex:1">${tri('#666')}</div></div>${sp(2)}<span class="d"></span>
 <div class="geo">几何<span style="margin-left:auto;padding-right:7px">${tri('#888')}</span></div>`);

def('tb-slot',`:host{display:flex;align-items:center;justify-content:center;height:40px;width:49px;flex:none;position:relative}
 :host([open])::after{content:"";position:absolute;left:4.500px;right:4.500px;bottom:0;height:2px;background:#a9d6f5}`,'<slot></slot>');
def('creo-taskbar',`:host{display:flex;align-items:center;height:40px;background:linear-gradient(90deg,#14110d,#0f0d0a 40%,#100c08 70%,#0a0806);flex:none;font:14px ${FONT};color:#fff;position:relative}
 .w{width:48px;display:flex;justify-content:center;flex:none}
 .s{width:344px;height:40px;background:#333;display:flex;align-items:center;flex:none;box-sizing:border-box;padding-left:9px;color:#9c9c9c}
 .t{margin-left:9px}.m{margin-left:auto;padding-right:13px;display:flex}
 .tray{position:absolute;top:0;height:40px;display:flex;align-items:center;justify-content:center;width:24px}
 .clock{position:absolute;left:1790px;width:80px;top:3px;text-align:center;font:13px/18px ${FONT};color:#e8e8e8}`,
 `<div class="w"><c-ico name="wlogo"></c-ico></div><div class="s"><c-ico name="ring"></c-ico><span class="t">在这里输入你要搜索的内容</span><span class="m"><c-ico name="mic"></c-ico></span></div>
 <div style="width:50px;display:flex;justify-content:center;flex:none"><c-ico name="tview"></c-ico></div>
 <tb-slot><c-ico name="mail"></c-ico></tb-slot><tb-slot><c-ico name="folder"></c-ico></tb-slot><tb-slot><c-ico name="store"></c-ico></tb-slot>
 <tb-slot open><c-ico name="acad"></c-ico></tb-slot><tb-slot open><c-ico name="blue"></c-ico></tb-slot><tb-slot open><c-ico name="creoB"></c-ico></tb-slot><tb-slot open><c-ico name="chrome"></c-ico></tb-slot>
 <div class="tray" style="left:1628px"><c-ico name="cc"></c-ico></div><div class="tray" style="left:1651px"><c-ico name="shield"></c-ico></div><div class="tray" style="left:1676px"><c-ico name="usb"></c-ico></div><div class="tray" style="left:1700px"><c-ico name="bird"></c-ico></div><div class="tray" style="left:1724px"><c-ico name="net"></c-ico></div><div class="tray" style="left:1746px"><c-ico name="vol"></c-ico></div>
 <div class="tray" style="left:1771px;font:15px 'Noto Sans CJK SC',sans-serif">中</div>
 <div class="clock">16:09<br>2017/6/20</div><div class="tray" style="left:1875px"><c-ico name="note"></c-ico></div>`);

def('creo-watermark',`:host{display:block;position:absolute;left:1709px;top:1013px;width:211px;height:62px;background:rgba(255,255,255,.2);pointer-events:none}
 svg{position:absolute;left:3px;top:2px}
 .z{position:absolute;left:70px;top:0;width:125px;font:700 29px/40px "Noto Sans CJK SC",sans-serif;letter-spacing:1px;white-space:nowrap;background:linear-gradient(#9ddcb4 0,#9ddcb4 27px,#0d5c2e 27px);-webkit-background-clip:text;background-clip:text;color:transparent}
 .u{position:absolute;left:59px;top:37px;font:17px/24px "Liberation Sans",sans-serif;color:#2a4448;white-space:nowrap}`,
 `<svg width="58" height="58" viewBox="0 0 58 58" fill="none"><ellipse cx="21" cy="20" rx="20" ry="13" transform="rotate(45 21 20)" stroke="#7f9aaa" stroke-width="3.500" opacity=".8"/><ellipse cx="39" cy="35" rx="20" ry="12" transform="rotate(-50 39 35)" stroke="#8a2a30" stroke-width="3.500" opacity=".85"/></svg>
 <div class="z">野火论坛</div><div class="u">www.proewildfire.cn</div>`);

def('creo-app',`:host{display:flex;flex-direction:column;width:1920px;height:1080px;position:relative;overflow:hidden;background:#222}
 .main{display:flex;flex:1;min-height:0}`,
 `<creo-titlebar></creo-titlebar>
 <creo-tabs>
  <creo-tab first style="width:80px">文件</creo-tab><creo-tab active style="width:71px">模型</creo-tab><creo-tab style="width:71px">分析</creo-tab><creo-tab style="width:71px">注释</creo-tab><creo-tab style="width:71px">工具</creo-tab><creo-tab style="width:71px">视图</creo-tab><creo-tab style="width:101px">柔性建模</creo-tab><creo-tab style="width:101px">应用程序</creo-tab><creo-tab style="width:118px">SyinToolkt</creo-tab><creo-tab style="width:101px;border-right:0">KeyShot</creo-tab>
 </creo-tabs>
 <creo-ribbon>
  <rb-group label="操作" style="width:129px"><rb-big icon="regen" arrow style="width:62px">重新生成</rb-big><rb-col><rb-small off icon="copy">复制</rb-small><rb-small off icon="paste" arrow>粘贴</rb-small><rb-small off icon="del" arrow>删除</rb-small></rb-col></rb-group>
  <rb-group label="获取数据" style="width:107px"><rb-col style="margin-left:7px"><rb-small icon="udf">用户定义特征</rb-small><rb-small icon="cpgeo">复制几何</rb-small><rb-small icon="shrink">收缩包络</rb-small></rb-col></rb-group>
  <rb-group label="基准" style="width:151px"><rb-big icon="plane" style="width:44px">平面</rb-big><rb-col style="width:58px;margin-left:3px"><rb-small icon="axis">轴</rb-small><rb-small icon="point" arrow>点</rb-small><rb-small icon="csys">坐标系</rb-small></rb-col><rb-big icon="sketch" style="width:44px">草绘</rb-big></rb-group>
  <rb-group label="形状" style="width:123px"><rb-big icon="extrude" style="width:46px">拉伸</rb-big><rb-col style="margin-left:1px"><rb-small icon="rev">旋转</rb-small><rb-small icon="sweep" arrow>扫描</rb-small><rb-small icon="swpb">扫描混合</rb-small></rb-col></rb-group>
  <rb-group label="工程" style="width:151px"><rb-col style="width:78px;margin-left:7px"><rb-small icon="hole">孔</rb-small><rb-small icon="round" arrow>倒圆角</rb-small><rb-small icon="cham" arrow>倒角</rb-small></rb-col><rb-col><rb-small icon="draft" arrow>拔模</rb-small><rb-small icon="shell">壳</rb-small><rb-small icon="rib" arrow>筋</rb-small></rb-col></rb-group>
  <rb-group label="编辑" style="width:215px"><rb-big icon="pattern" arrow style="width:46px">阵列</rb-big><rb-col style="width:52px;margin-left:1px"><rb-small off icon="mirror">镜像</rb-small><rb-small off icon="trim">修剪</rb-small><rb-small off icon="merge">合并</rb-small></rb-col><rb-col style="width:52px"><rb-small off icon="extend">延伸</rb-small><rb-small off icon="offset">偏移</rb-small><rb-small off icon="inter">相交</rb-small></rb-col><rb-col><rb-small icon="project">投影</rb-small><rb-small off icon="thick">加厚</rb-small><rb-small off icon="solid">实体化</rb-small></rb-col></rb-group>
  <rb-group label="曲面" style="width:127px"><rb-big icon="bound" style="width:62px">边界混合</rb-big><rb-col style="margin-left:2px"><rb-small icon="fill">填充</rb-small><rb-small icon="style">样式</rb-small><rb-small icon="free">自由式</rb-small></rb-col></rb-group>
  <rb-group label="模型意图" style="width:70px"><rb-big icon="comp" style="width:69px">元件界面</rb-big></rb-group>
 </creo-ribbon>
 <div class="main"><creo-sidebar>
  <tree-row icon="pl">RIGHT</tree-row><tree-row icon="pl">TOP</tree-row><tree-row icon="pl">FRONT</tree-row><tree-row icon="csys">PRT_CSYS_DEF</tree-row><tree-row icon="axis">A_1</tree-row>
  <tree-row exp icon="rev">旋转 1</tree-row><tree-row exp icon="patt">阵列 1 / LOCAL_GROUP</tree-row><tree-row icon="thk">加厚 1</tree-row><tree-row exp icon="ext">拉伸 7</tree-row><tree-row icon="pl">DTM1</tree-row><tree-row exp icon="patt">阵列 2 / 轮廓 筋 1</tree-row><tree-row icon="rnd">倒圆角 1</tree-row><tree-row icon="ins">在此插入</tree-row>
 </creo-sidebar><creo-viewport></creo-viewport></div>
 <creo-status></creo-status><creo-taskbar></creo-taskbar><creo-watermark></creo-watermark>`);
</script></body></html>
